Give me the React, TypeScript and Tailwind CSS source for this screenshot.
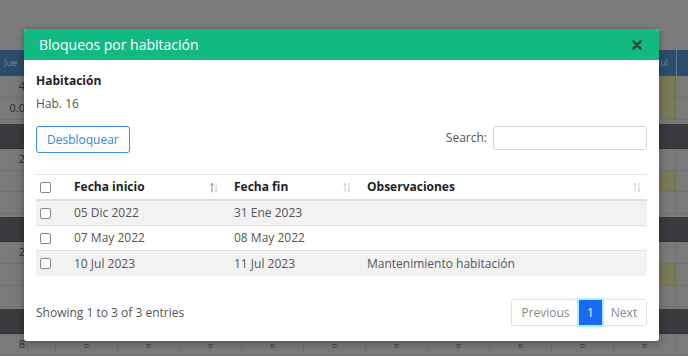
import React from "react";

const font = { fontFamily: '"Open Sans", "Noto Sans", sans-serif' };

function SortIcon({ active }: { active?: "up" | "down" }) {
  return (
    <svg width="8" height="11" viewBox="0 0 8 11" className="shrink-0">
      <g strokeWidth="1" fill="none" strokeLinecap="round">
        <path d="M2 10V1.5M0.5 3L2 1.5L3.5 3" stroke={active === "up" ? "#8a8a8a" : "#d0d0d0"} />
        <path d="M6 1V9.5M4.5 8L6 9.5L7.5 8" stroke={active === "down" ? "#8a8a8a" : "#d0d0d0"} />
      </g>
    </svg>
  );
}

function Check() {
  return <div className="w-[11px] h-[11px] border border-[#858585] rounded-[2px] bg-white" />;
}

const cols = ["w-[28px]", "w-[62px]", "w-[62px]", "w-[62px]", "w-[62px]", "w-[62px]", "w-[62px]", "w-[62px]", "w-[62px]", "w-[62px]", "w-[62px]"];

function BgRow({ h, dark, label, yellow, dots }: { h: string; dark?: boolean; label?: string; yellow?: boolean; dots?: boolean }) {
  if (dark) return <div className={`${h} bg-[#393b3e] border-b border-[#2f3133]`} />;
  return (
    <div className={`${h} flex bg-[#7a7a7a] border-b border-[#707070]`}>
      <div className="w-[28px] shrink-0 border-r border-[#6e6e6e] flex items-center justify-end pr-[2px] text-[11px] text-[#2e2e2e]">{label}</div>
      {cols.map((c, i) => (
        <div
          key={i}
          className={`${c} shrink-0 border-r border-[#6e6e6e] flex items-center justify-center text-[8px] text-[#333] ${yellow && i === 10 ? "bg-[#7b7a55]" : ""}`}
        >
          {dots && i > 0 ? "o" : ""}
        </div>
      ))}
    </div>
  );
}

export default function App() {
  return (
    <div className="relative w-[688px] h-[356px] overflow-hidden bg-[#7b7b7b]" style={font}>
      {/* background page (dimmed) */}
      <div className="flex flex-col">
        <div className="h-[50px] bg-[#7c7c7c]" />
        <div className="h-[26px] bg-[#2b4d6b] flex items-center text-[9px] text-[#6f8aa3]">
          <div className="w-[28px] pl-1 border-r border-[#3c5f7e] h-full flex items-center">Jue</div>
          <div className="flex-1" />
          <div className="w-[17px] border-r border-[#5a7a96] h-full flex items-center">ul</div>
          <div className="w-[11px]" />
        </div>
        <BgRow h="h-[22px]" label="4" yellow />
        <BgRow h="h-[22px]" label="0.0" yellow />
        <div className="h-[4px] bg-[#7a7a7a]" />
        <BgRow h="h-[25px]" dark />
        <BgRow h="h-[22px]" label="2" />
        <BgRow h="h-[21px]" yellow />
        <BgRow h="h-[22px]" />
        <div className="h-[3px] bg-[#7a7a7a]" />
        <BgRow h="h-[25px]" dark />
        <BgRow h="h-[22px]" label="2" />
        <BgRow h="h-[22px]" yellow />
        <BgRow h="h-[21px]" />
        <div className="h-[2px] bg-[#7a7a7a]" />
        <BgRow h="h-[25px]" dark />
        <BgRow h="h-[22px]" label="8" dots />
      </div>

      {/* modal */}
      <div className="absolute left-[24px] top-[29px] w-[635px] h-[312px] bg-white rounded-[3px] shadow-[0_2px_8px_rgba(0,0,0,0.35)] flex flex-col overflow-hidden">
        <div className="h-[31px] bg-[#13b983] flex items-center justify-between pl-[15px] pr-[17px] shrink-0">
          <span className="text-white text-[14px]">Bloqueos por habitación</span>
          <svg width="10" height="10" viewBox="0 0 10 10">
            <path d="M1.5 1.5L8.5 8.5M8.5 1.5L1.5 8.5" stroke="#1c4d3f" strokeWidth="2.6" strokeLinecap="round" />
          </svg>
        </div>
        <div className="px-3 pt-[13px] flex flex-col">
          <div className="text-[12px] leading-[16px] font-bold text-[#222]">Habitación</div>
          <div className="mt-[7px] text-[12px] leading-[16px] text-[#555]">Hab. 16</div>
          <div className="mt-[14px] flex justify-between items-start">
            <button className="h-[27px] px-[10px] border border-[#3a8ee6] rounded-[3px] text-[#2f88e0] text-[12px] leading-none">
              Desbloquear
            </button>
            <div className="flex items-center gap-[6px]">
              <span className="text-[12px] text-[#555]">Search:</span>
              <div className="w-[154px] h-[24px] border border-[#d6d6d6] rounded-[3px]" />
            </div>
          </div>
          <div className="mt-[21px] border-t border-[#e6e6e6]">
            <div className="h-[26px] flex items-center border-b-2 border-[#dedede] text-[12px] font-bold text-[#222]">
              <div className="w-[26px] pl-1 flex items-center"><Check /></div>
              <div className="w-[160px] pl-3 pr-[4px] flex items-center justify-between">
                <span>Fecha inicio</span>
                <SortIcon active="up" />
              </div>
              <div className="w-[133px] pl-3 pr-[4px] flex items-center justify-between">
                <span>Fecha fin</span>
                <SortIcon />
              </div>
              <div className="w-[292px] pl-3 pr-[6px] flex items-center justify-between">
                <span>Observaciones</span>
                <SortIcon />
              </div>
            </div>
            {[
              ["05 Dic 2022", "31 Ene 2023", "", true],
              ["07 May 2022", "08 May 2022", "", false],
              ["10 Jul 2023", "11 Jul 2023", "Mantenimiento habitación", true],
            ].map(([a, b, c, g], i) => (
              <div
                key={i}
                className={`h-[25px] flex items-center text-[12px] text-[#555] ${g ? "bg-[#f2f2f2]" : "bg-white"} ${i < 2 ? "border-b border-[#e2e2e2]" : ""}`}
              >
                <div className="w-[26px] pl-1 flex items-center"><Check /></div>
                <div className="w-[160px] pl-3">{a as string}</div>
                <div className="w-[133px] pl-3">{b as string}</div>
                <div className="w-[292px] pl-3">{c as string}</div>
              </div>
            ))}
          </div>
          <div className="mt-[23px] flex justify-between items-center">
            <span className="text-[12px] text-[#555]">Showing 1 to 3 of 3 entries</span>
            <div className="flex h-[27px] border border-[#e2e2e2] rounded-[3px] text-[12px] text-[#888]">
              <div className="w-[67px] flex items-center justify-center">Previous</div>
              <div className="w-[23px] flex items-center justify-center bg-[#1b68f5] text-white ring-2 ring-[#a9f3f7]">1</div>
              <div className="w-[44px] flex items-center justify-center">Next</div>
            </div>
          </div>
        </div>
      </div>
    </div>
  );
}
